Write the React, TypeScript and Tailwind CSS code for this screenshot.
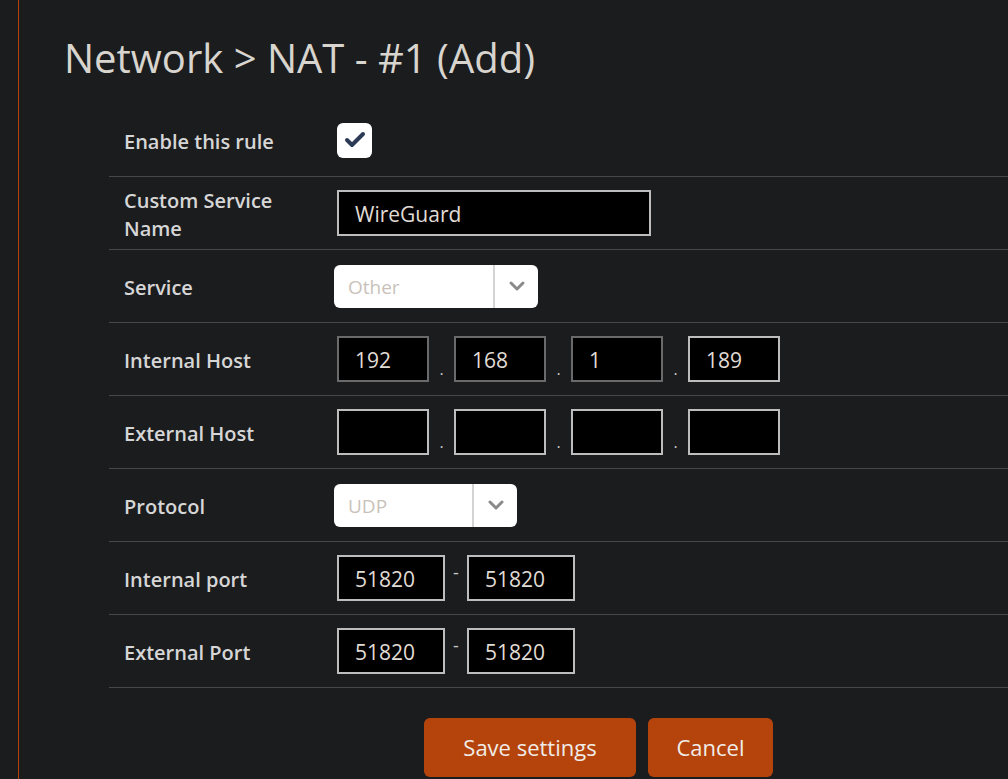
import { ChevronDown, Check } from 'lucide-react';

const font = { fontFamily: '"Open Sans", "Noto Sans", sans-serif' };

function Row({ label, children }: { label: React.ReactNode; children: React.ReactNode }) {
  return (
    <div className="flex h-[73px] items-center border-b border-[#45474a]">
      <div className="w-[228px] pl-[15px] pt-[3px] text-[20px] font-semibold leading-[28px] text-[#d6d6d6]">{label}</div>
      <div className="flex items-center">{children}</div>
    </div>
  );
}

function Box({ value = '', w = 'w-[92px]', dim = false }: { value?: string; w?: string; dim?: boolean }) {
  return (
    <div
      className={`${w} flex h-[46px] items-center border-2 bg-black pl-4 pt-[3px] text-[21px] text-[#e0dcd6] ${
        dim ? 'border-[#6a6a6a]' : 'border-[#bdbdbd]'
      }`}
    >
      {value}
    </div>
  );
}

function Select({ value, w }: { value: string; w: string }) {
  return (
    <div className={`${w} -ml-[3px] flex h-[43px] items-center rounded-md bg-white`}>
      <div className="flex-1 pl-[14px] pt-[2px] text-[19px] text-[#c9c2bb]">{value}</div>
      <div className="flex h-full w-[45px] items-center justify-center border-l-2 border-[#d4d4d4]">
        <ChevronDown className="h-6 w-6 text-[#8a8a8a]" strokeWidth={3} />
      </div>
    </div>
  );
}

function Ip({ parts }: { parts: string[] }) {
  return (
    <div className="flex items-center">
      {[0, 1, 2, 3].map((i) => (
        <div key={i} className="flex items-center">
          {i > 0 && <span className="mt-5 w-[25px] text-center text-[16px] leading-none text-[#c8c8c8]">.</span>}
          <Box value={parts[i]} dim={parts[i] !== '' && i < 3} />
        </div>
      ))}
    </div>
  );
}

function Ports() {
  return (
    <div className="flex items-center">
      <Box value="51820" w="w-[108px]" />
      <span className="-mt-3 w-[22px] text-center text-[18px] text-[#c8c8c8]">-</span>
      <Box value="51820" w="w-[108px]" />
    </div>
  );
}

export default function App() {
  return (
    <div className="min-h-[779px] w-full overflow-hidden bg-[#1b1c1e]" style={font}>
      <div className="ml-[18px] min-h-[779px] border-l border-[#b5440c]">
        <h1 className="h-[104px] pl-[45px] pt-[30px] text-[40px] font-normal leading-[56px] text-[#d8d4ce]">
          Network &gt; NAT - #1 (Add)
        </h1>
        <div className="ml-[90px]">
          <Row label="Enable this rule">
            <div className="flex h-[35px] w-[35px] items-center justify-center rounded-md bg-white">
              <Check className="h-6 w-6 text-[#2c3a55]" strokeWidth={4} />
            </div>
          </Row>
          <Row
            label={
              <>
                Custom Service
                <br />
                Name
              </>
            }
          >
            <Box value="WireGuard" w="w-[314px]" />
          </Row>
          <Row label="Service">
            <Select value="Other" w="w-[204px]" />
          </Row>
          <Row label="Internal Host">
            <Ip parts={['192', '168', '1', '189']} />
          </Row>
          <Row label="External Host">
            <Ip parts={['', '', '', '']} />
          </Row>
          <Row label="Protocol">
            <Select value="UDP" w="w-[183px]" />
          </Row>
          <Row label="Internal port">
            <Ports />
          </Row>
          <Row label="External Port">
            <Ports />
          </Row>
          <div className="flex gap-3 pl-[315px] pt-[30px]">
            <button className="h-[59px] w-[212px] rounded-md bg-[#b5440c] text-[22px] text-[#f0ece8]">
              Save settings
            </button>
            <button className="h-[59px] w-[125px] rounded-md bg-[#b5440c] text-[22px] text-[#f0ece8]">
              Cancel
            </button>
          </div>
        </div>
      </div>
    </div>
  );
}
